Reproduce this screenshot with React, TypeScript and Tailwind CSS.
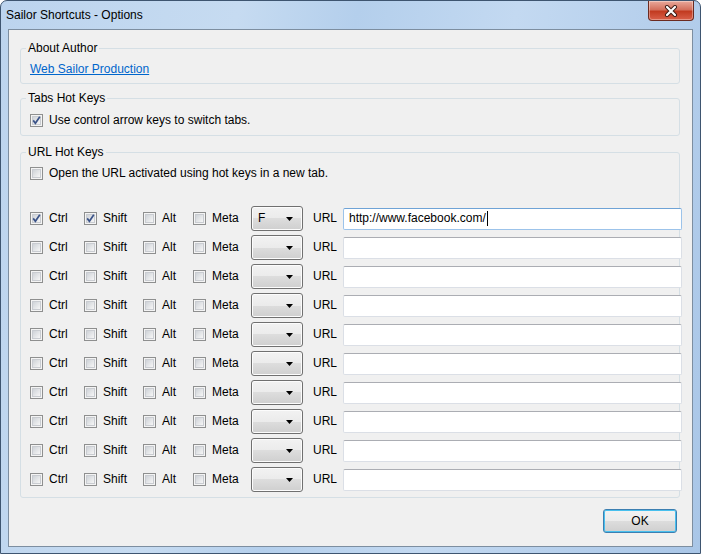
import React from "react";

type Row = { ctrl?: boolean; shift?: boolean; key?: string; url?: string; focused?: boolean };

const rows: Row[] = [
  { ctrl: true, shift: true, key: "F", url: "http://www.facebook.com/", focused: true },
  {},
  {},
  {},
  {},
  {},
  {},
  {},
  {},
  {},
];

function Box({ checked }: { checked?: boolean }) {
  return (
    <span className="relative flex h-[13px] w-[13px] shrink-0 items-center justify-center border border-[#8e8f8f] bg-[#f4f4f4]">
      <span className="h-[9px] w-[9px] border border-[#c9ccd1] bg-[linear-gradient(135deg,#cfd3d8,#f6f6f6)]" />
      {checked && (
        <svg className="absolute left-0 top-0" width="11" height="11" viewBox="0 0 11 11">
          <path d="M2.2 5.4 L4.4 8.2 L8.8 1.8" fill="none" stroke="#3b5388" strokeWidth="1.7" />
        </svg>
      )}
    </span>
  );
}

function Check({ label, checked, w }: { label: string; checked?: boolean; w: string }) {
  return (
    <div className={`flex shrink-0 items-center gap-[6px] ${w}`}>
      <Box checked={checked} />
      <span>{label}</span>
    </div>
  );
}

function Dropdown({ value }: { value?: string }) {
  return (
    <div className="flex h-[25px] w-[52px] shrink-0 items-center justify-between rounded-[3px] border border-[#707070] bg-[linear-gradient(#f2f2f2,#ebebeb_50%,#dddddd_50%,#cfcfcf)] pl-[6px] pr-[9px] shadow-[inset_0_0_0_1px_#fcfcfc]">
      <span>{value}</span>
      <svg width="7" height="4" viewBox="0 0 7 4">
        <path d="M0 0 H7 L3.5 4 Z" fill="#000" />
      </svg>
    </div>
  );
}

function UrlBox({ value, focused }: { value?: string; focused?: boolean }) {
  return (
    <div
      className={`flex h-[22px] w-[339px] shrink-0 items-center rounded-[2px] border bg-white pl-[5px] ${
        focused ? "border-[#9cc3ea] border-t-[#6fa3d6]" : "border-[#dbdfe6] border-t-[#abadb3]"
      }`}
    >
      <span>{value}</span>
      {focused && <span className="ml-[1px] h-[15px] w-[1px] bg-black" />}
    </div>
  );
}

export default function App() {
  return (
    <div className="flex h-[554px] w-[701px] flex-col rounded-t-[7px] border border-[#3e5570] bg-[linear-gradient(100deg,#bcd4ee_0%,#c6dbf1_30%,#b4cfec_45%,#c3d9f1_65%,#a9c6e7_100%)] font-['Liberation_Sans',Arial,sans-serif] text-[12px] leading-[15px] text-black">
      <div className="flex h-[28px] shrink-0 items-start justify-between">
        <div className="pl-[5px] pt-[7px] text-[12px]">Sailor Shortcuts - Options</div>
        <div className="mr-[6px] flex h-[20px] w-[46px] items-center justify-center rounded-b-[4px] border border-t-0 border-[#6b2a20] bg-[linear-gradient(#e9a99b,#d4705d_45%,#c23b21_55%,#d9604a)] shadow-[inset_0_0_0_1px_rgba(255,255,255,0.35)]">
          <svg width="14" height="12" viewBox="0 0 14 12">
            <path d="M3 2 L11 10 M11 2 L3 10" stroke="#3a1a14" strokeWidth="4" strokeLinecap="round" />
            <path d="M3 2 L11 10 M11 2 L3 10" stroke="#fff" strokeWidth="2.2" strokeLinecap="round" />
          </svg>
        </div>
      </div>
      <div className="mx-[7px] mb-[6px] flex flex-1 flex-col border border-[#7d8ea0] bg-[#f0f0f0] pl-[11px] pr-[12px] pt-[11px]">
        <fieldset className="h-[43px] min-w-0 rounded-[3px] border border-[#d5dfe5] px-[9px]">
          <legend className="ml-[-4px] px-[2px]">About Author</legend>
          <div className="pt-[6px]">
            <span className="text-[#0066cc] underline">Web Sailor Production</span>
          </div>
        </fieldset>
        <fieldset className="mt-[7px] h-[45px] min-w-0 rounded-[3px] border border-[#d5dfe5] px-[9px]">
          <legend className="ml-[-4px] px-[2px]">Tabs Hot Keys</legend>
          <div className="pt-[7px]">
            <Check label="Use control arrow keys to switch tabs." checked w="" />
          </div>
        </fieldset>
        <fieldset className="mt-[9px] h-[353px] min-w-0 rounded-[3px] border border-[#d5dfe5] pl-[9px]">
          <legend className="ml-[-4px] px-[2px]">URL Hot Keys</legend>
          <div className="pt-[6px]">
            <Check label="Open the URL activated using hot keys in a new tab." w="" />
          </div>
          <div className="mt-[23px] flex flex-col">
            {rows.map((r, i) => (
              <div key={i} className="flex h-[29px] items-center">
                <Check label="Ctrl" checked={r.ctrl} w="w-[54px]" />
                <Check label="Shift" checked={r.shift} w="w-[59px]" />
                <Check label="Alt" w="w-[50px]" />
                <Check label="Meta" w="w-[58px]" />
                <Dropdown value={r.key} />
                <span className="ml-[10px] w-[30px] shrink-0">URL</span>
                <UrlBox value={r.url} focused={r.focused} />
              </div>
            ))}
          </div>
        </fieldset>
        <div className="mt-[11px] flex justify-end pr-[3px]">
          <div className="flex h-[24px] w-[74px] items-center justify-center rounded-[3px] border border-[#3c7fb1] bg-[linear-gradient(#f2f2f2,#ebebeb_50%,#dddddd_50%,#cfcfcf)] shadow-[inset_0_0_0_1px_#48c0ee]">
            OK
          </div>
        </div>
      </div>
    </div>
  );
}
